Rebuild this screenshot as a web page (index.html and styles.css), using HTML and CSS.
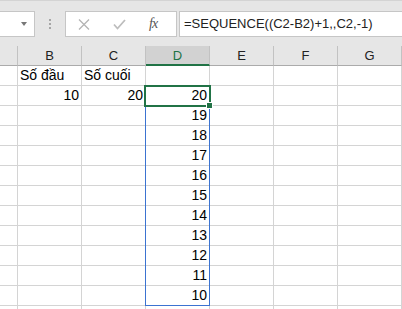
FILE: index.html
```html
<!DOCTYPE html>
<html>

<head>
    <title>SEQUENCE</title>
    <link rel="stylesheet" href="styles.css">
</head>

<body>
    <div class="formula-bar">
        <div class="name-box">
            <span class="arrow"></span>
        </div>
        <div class="grip">
            <span></span><span></span><span></span>
        </div>
        <div class="fx-box">
            <svg class="icon" width="12" height="11" viewBox="0 0 12 11">
                <path d="M1 0.5 L11 10.5 M11 0.5 L1 10.5" stroke="#b4b4b4" stroke-width="1.3" fill="none" />
            </svg>
            <svg class="icon" width="13" height="11" viewBox="0 0 13 11">
                <path d="M1 5.5 L4.5 9.5 L12 1" stroke="#bdbdbd" stroke-width="1.8" fill="none" />
            </svg>
            <span class="fx">fx</span>
        </div>
        <div class="formula-input">=SEQUENCE((C2-B2)+1,,C2,-1)</div>
    </div>

    <div class="sheet">
        <div class="cell head"></div>
        <div class="cell head">B</div>
        <div class="cell head">C</div>
        <div class="cell head active">D</div>
        <div class="cell head">E</div>
        <div class="cell head">F</div>
        <div class="cell head">G</div>

        <div class="cell"></div>
        <div class="cell">Số đầu</div>
        <div class="cell">Số cuối</div>
        <div class="cell"></div>
        <div class="cell"></div>
        <div class="cell"></div>
        <div class="cell"></div>

        <div class="cell"></div>
        <div class="cell num">10</div>
        <div class="cell num">20</div>
        <div class="cell num">20</div>
        <div class="cell"></div>
        <div class="cell"></div>
        <div class="cell"></div>

        <div class="cell"></div><div class="cell"></div><div class="cell"></div>
        <div class="cell num">19</div><div class="cell"></div><div class="cell"></div><div class="cell"></div>
        <div class="cell"></div><div class="cell"></div><div class="cell"></div>
        <div class="cell num">18</div><div class="cell"></div><div class="cell"></div><div class="cell"></div>
        <div class="cell"></div><div class="cell"></div><div class="cell"></div>
        <div class="cell num">17</div><div class="cell"></div><div class="cell"></div><div class="cell"></div>
        <div class="cell"></div><div class="cell"></div><div class="cell"></div>
        <div class="cell num">16</div><div class="cell"></div><div class="cell"></div><div class="cell"></div>
        <div class="cell"></div><div class="cell"></div><div class="cell"></div>
        <div class="cell num">15</div><div class="cell"></div><div class="cell"></div><div class="cell"></div>
        <div class="cell"></div><div class="cell"></div><div class="cell"></div>
        <div class="cell num">14</div><div class="cell"></div><div class="cell"></div><div class="cell"></div>
        <div class="cell"></div><div class="cell"></div><div class="cell"></div>
        <div class="cell num">13</div><div class="cell"></div><div class="cell"></div><div class="cell"></div>
        <div class="cell"></div><div class="cell"></div><div class="cell"></div>
        <div class="cell num">12</div><div class="cell"></div><div class="cell"></div><div class="cell"></div>
        <div class="cell"></div><div class="cell"></div><div class="cell"></div>
        <div class="cell num">11</div><div class="cell"></div><div class="cell"></div><div class="cell"></div>
        <div class="cell"></div><div class="cell"></div><div class="cell"></div>
        <div class="cell num">10</div><div class="cell"></div><div class="cell"></div><div class="cell"></div>
        <div class="cell"></div><div class="cell"></div><div class="cell"></div>
        <div class="cell"></div><div class="cell"></div><div class="cell"></div><div class="cell"></div>

        <div class="spill"></div>
        <div class="active-cell"><span class="handle"></span></div>
    </div>
</body>

</html>
```

FILE: styles.css
```css
body {
    margin: 0;
    font-family: "Liberation Sans", Arial, sans-serif;
    background: #fff;
    overflow: hidden;
}

.formula-bar {
    height: 46px;
    box-sizing: border-box;
    background: #e6e6e6;
    border-top: 1px solid #d4d4d4;
    display: flex;
    align-items: flex-start;
    padding-top: 10px;
}

.name-box {
    width: 35px;
    height: 26px;
    box-sizing: border-box;
    background: #fff;
    border: 1px solid #c6c6c6;
    border-left: none;
    display: flex;
    justify-content: flex-end;
    align-items: center;
    padding-right: 7px;
}

.arrow {
    width: 0;
    height: 0;
    border-left: 3.5px solid transparent;
    border-right: 3.5px solid transparent;
    border-top: 4px solid #777;
}

.grip {
    width: 30px;
    height: 26px;
    display: flex;
    flex-direction: column;
    align-items: center;
    justify-content: center;
    gap: 2px;
}

.grip span {
    width: 2px;
    height: 2px;
    background: #a6a6a6;
}

.fx-box {
    width: 112px;
    height: 26px;
    box-sizing: border-box;
    background: #fff;
    border: 1px solid #c6c6c6;
    display: flex;
    align-items: center;
    padding-left: 12px;
    gap: 23px;
}

.fx {
    font-family: "Liberation Serif", serif;
    font-style: italic;
    font-size: 14px;
    color: #555;
    letter-spacing: -1px;
}

.formula-input {
    flex: 1;
    height: 26px;
    box-sizing: border-box;
    margin-left: 2px;
    background: #fff;
    border: 1px solid #c6c6c6;
    border-right: none;
    padding-left: 4px;
    font-size: 13px;
    line-height: 24px;
    color: #222;
}

.sheet {
    position: relative;
    height: 263px;
    overflow: hidden;
    display: grid;
    grid-template-columns: 18px repeat(6, 64px);
    grid-auto-rows: 20px;
}

.cell {
    box-sizing: border-box;
    border-right: 1px solid #d4d4d4;
    border-bottom: 1px solid #d4d4d4;
    font-size: 14px;
    color: #000;
    padding: 0 2px 2px;
    display: flex;
    align-items: flex-end;
    white-space: nowrap;
}

.num {
    justify-content: flex-end;
}

.head {
    background: #e6e6e6;
    border-right-color: #c2c2c2;
    border-bottom-color: #ababab;
    justify-content: center;
    align-items: center;
    font-size: 13px;
    padding: 0;
    color: #222;
}

.head.active {
    background: #d2d2d2;
    border-bottom: 2px solid #217346;
    color: #217346;
}

.spill {
    position: absolute;
    left: 145px;
    top: 39px;
    width: 65px;
    height: 221px;
    box-sizing: border-box;
    border: 1px solid #3b73d1;
}

.active-cell {
    position: absolute;
    left: 144px;
    top: 39px;
    width: 67px;
    height: 22px;
    box-sizing: border-box;
    border: 2px solid #217346;
}

.handle {
    position: absolute;
    right: -4px;
    bottom: -4px;
    width: 5px;
    height: 5px;
    background: #217346;
    border: 1px solid #fff;
}
```
